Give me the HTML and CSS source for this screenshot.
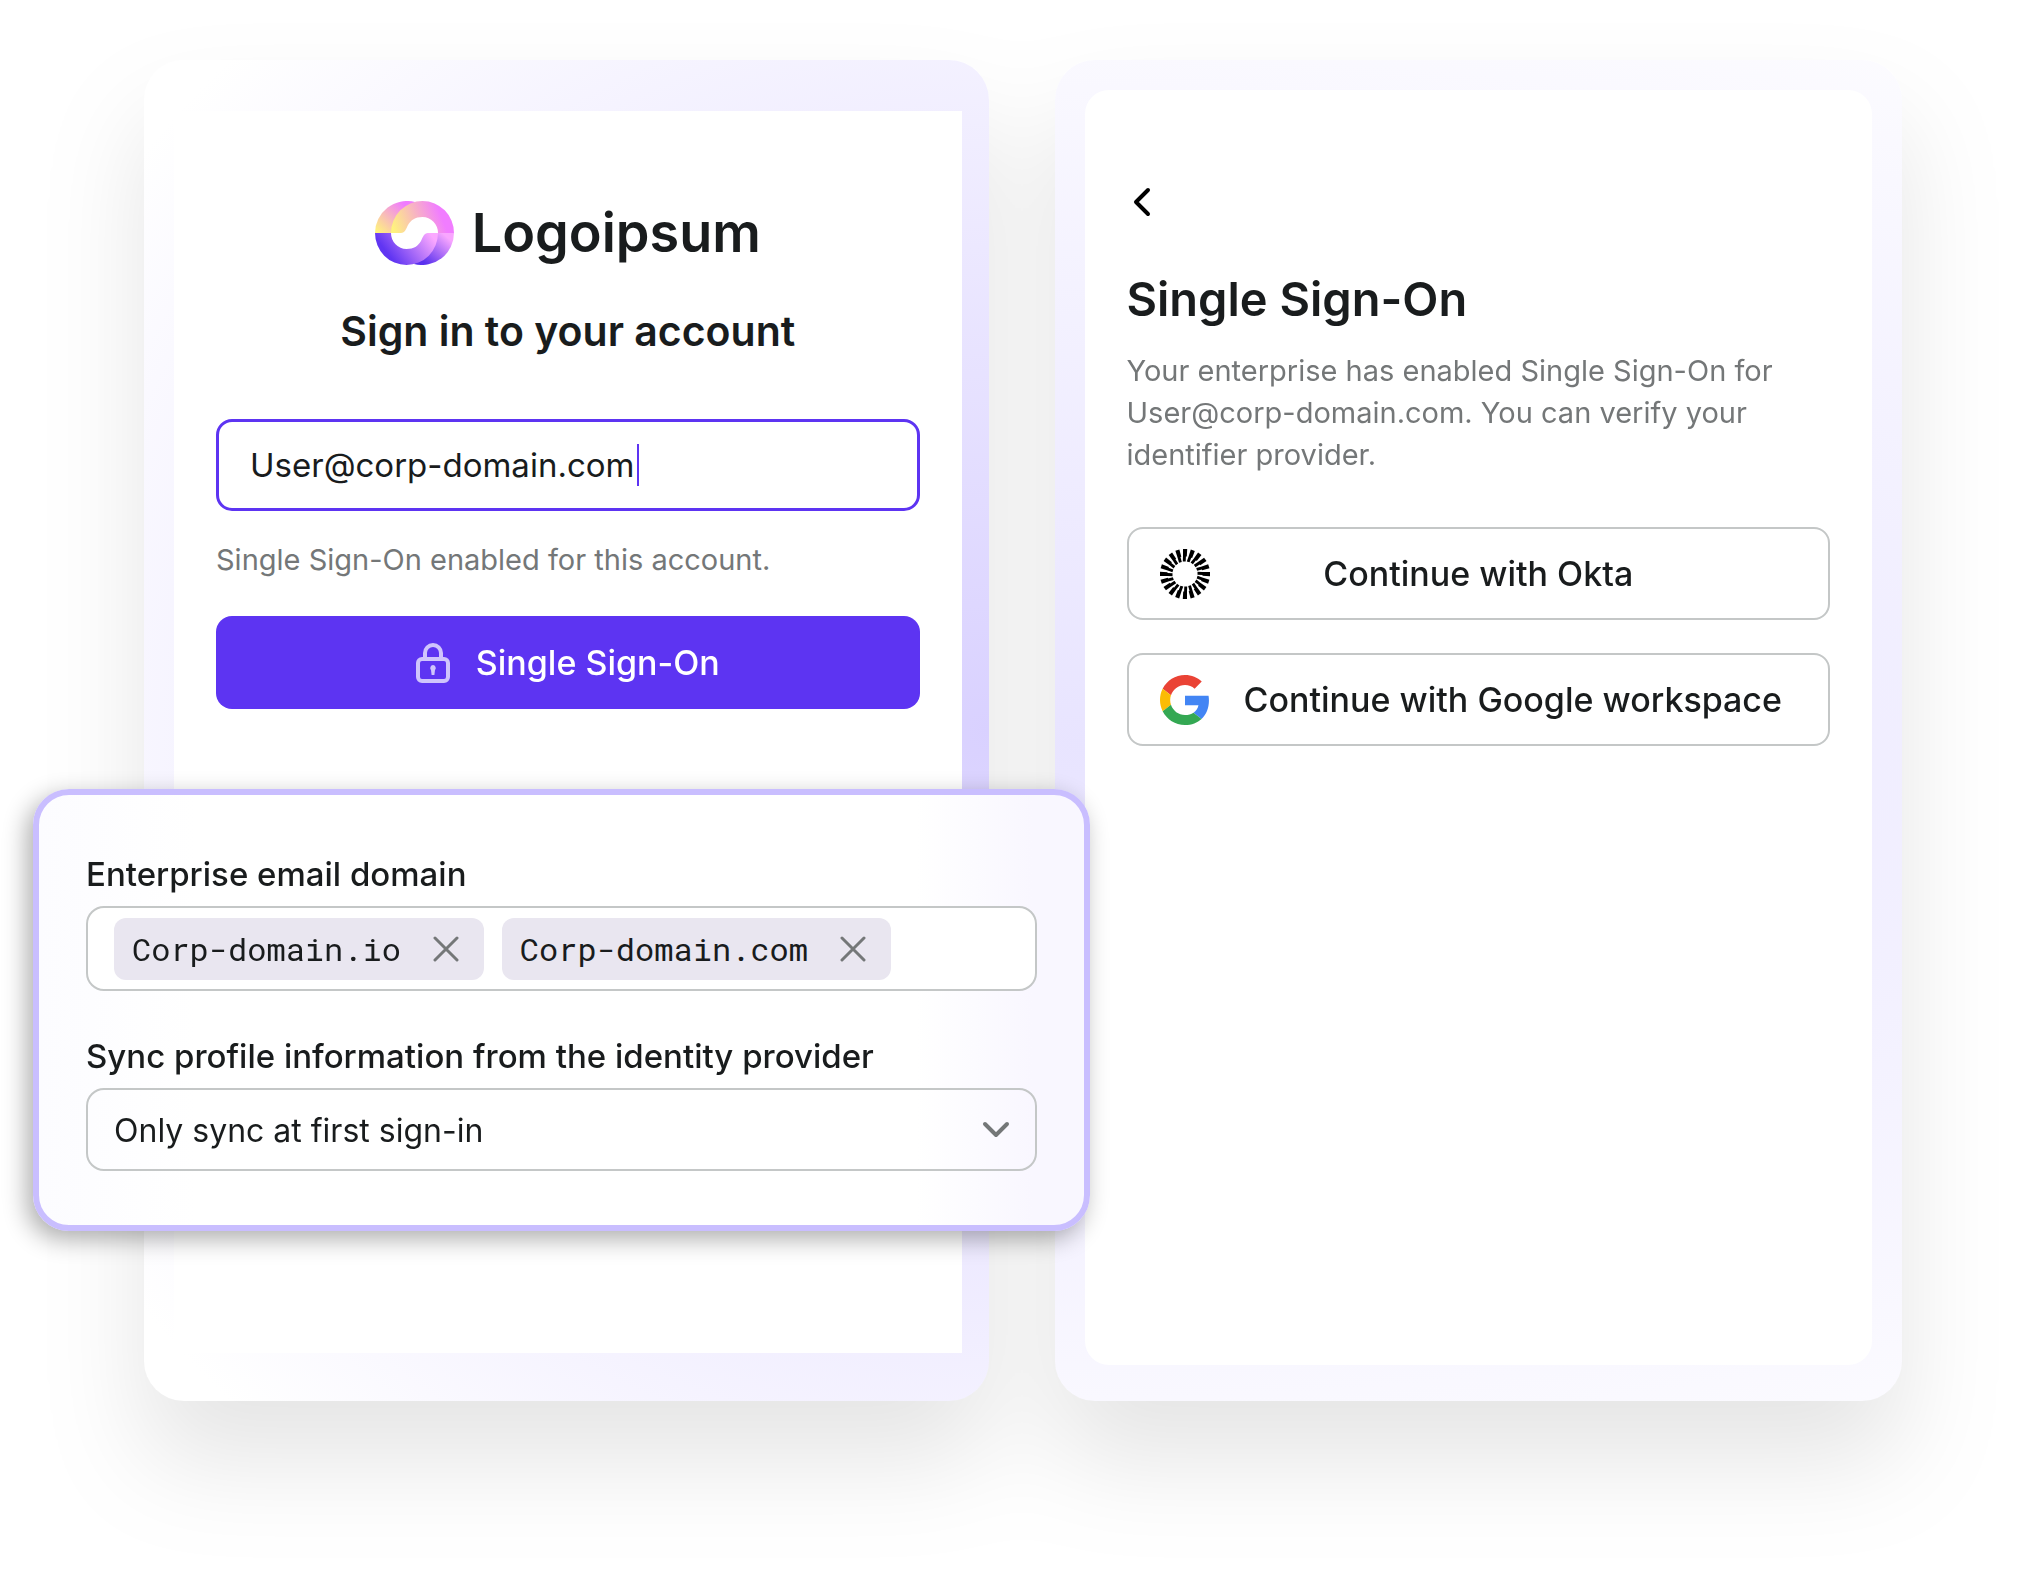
FILE: index.html
```html
<!DOCTYPE html>
<html lang="en">
<head>
  <meta charset="UTF-8">
  <meta name="viewport" content="width=device-width, initial-scale=1.0">
  <title>Single Sign-On</title>
  <link rel="stylesheet" href="styles.css">
</head>
<body>
  <main class="stage">
    <div class="cards">
      <!-- Sign in -->
      <section class="card card-signin">
        <form class="panel">
          <div class="logo">
            <svg class="logo-mark" viewBox="0 0 79 64" aria-hidden="true">
              <defs>
                <linearGradient id="topBack" gradientUnits="userSpaceOnUse" x1="3" y1="32" x2="30" y2="4">
                  <stop offset="0" stop-color="#fff47c"/>
                  <stop offset="1" stop-color="#f07bff"/>
                </linearGradient>
                <linearGradient id="topFront" gradientUnits="userSpaceOnUse" x1="19" y1="32" x2="66" y2="14">
                  <stop offset="0" stop-color="#fff47c"/>
                  <stop offset="1" stop-color="#f17dff"/>
                </linearGradient>
                <linearGradient id="bottomBack" gradientUnits="userSpaceOnUse" x1="72" y1="36" x2="50" y2="62">
                  <stop offset="0" stop-color="#f9a6ff"/>
                  <stop offset="1" stop-color="#5930ee"/>
                </linearGradient>
                <linearGradient id="bottomFront" gradientUnits="userSpaceOnUse" x1="56" y1="34" x2="20" y2="62">
                  <stop offset="0" stop-color="#fba8ff"/>
                  <stop offset="1" stop-color="#6035f2"/>
                </linearGradient>
              </defs>
              <path fill="url(#topBack)" d="M0 32A32 32 0 0 1 40 1L16 32Z"/>
              <path fill="url(#bottomBack)" d="M79 32A32 32 0 0 1 39 63L63 32Z"/>
              <path fill="url(#topFront)" d="M16 32A31.5 32 0 0 1 79 32H63A15.5 16 0 0 0 47.5 16C40 16 36 19 33 24C31 28 30 32 26 32Z"/>
              <path fill="url(#bottomFront)" d="M63 32A31.5 32 0 0 1 0 32H16A15.5 16 0 0 0 31.5 48C39 48 43 45 46 40C48 36 49 32 53 32Z"/>
            </svg>
            <span class="logo-name">Logoipsum</span>
          </div>
          <h1 class="signin-title">Sign in to your account</h1>
          <div class="field">
            <input class="field-input" type="text" value="User@corp-domain.com" aria-label="Email">
            <span class="caret"></span>
          </div>
          <p class="hint">Single Sign-On enabled for this account.</p>
          <button class="btn btn-primary" type="button">
            <svg class="lock" viewBox="0 0 34 40" fill="none" stroke="currentColor" stroke-width="4" aria-hidden="true">
              <rect x="2" y="16" width="30" height="22" rx="4"/>
              <path d="M9 16V10a8 8 0 0 1 16 0v6"/>
              <path fill="currentColor" stroke="none" d="M17 22a3 3 0 0 1 2 5l-.6 5h-2.800L15 27a3 3 0 0 1 2-5z"/>
            </svg>
            Single Sign-On
          </button>
        </form>
      </section>

      <!-- Provider list -->
      <section class="card card-sso">
        <div class="panel">
          <button class="back" type="button" aria-label="Back">
            <svg viewBox="0 0 18 30" fill="none" stroke="currentColor" stroke-width="4" stroke-linecap="round" stroke-linejoin="round">
              <path d="M15 3L3 15l12 12"/>
            </svg>
          </button>
          <h2 class="sso-title">Single Sign-On</h2>
          <p class="sso-text">Your enterprise has enabled Single Sign-On for User@corp-domain.com. You can verify your identifier provider.</p>
          <div class="providers">
            <button class="btn btn-provider" type="button">
              <svg class="provider-icon" viewBox="-25 -25 50 50" aria-hidden="true">
                <defs>
                  <path id="ray" d="M-2-25H2.200L1.800-17.500H.9L.7-12.500H-2.200L-2-17.500Z"/>
                  <g id="rays">
                    <use href="#ray"/>
                    <use href="#ray" transform="rotate(18)"/>
                    <use href="#ray" transform="rotate(36)"/>
                    <use href="#ray" transform="rotate(54)"/>
                    <use href="#ray" transform="rotate(72)"/>
                  </g>
                </defs>
                <use href="#rays"/>
                <use href="#rays" transform="rotate(90)"/>
                <use href="#rays" transform="rotate(180)"/>
                <use href="#rays" transform="rotate(270)"/>
              </svg>
              <span>Continue with Okta</span>
            </button>
            <button class="btn btn-provider" type="button">
              <svg class="provider-icon" viewBox="0 0 48 48" aria-hidden="true">
                <path fill="#EA4335" d="M24 9.500c3.540 0 6.710 1.220 9.210 3.600l6.850-6.850C35.900 2.380 30.470 0 24 0 14.620 0 6.510 5.380 2.560 13.220l7.980 6.190C12.430 13.720 17.740 9.500 24 9.500z"/>
                <path fill="#4285F4" d="M46.980 24.550c0-1.570-.15-3.090-.38-4.550H24v9.020h12.940c-.58 2.960-2.260 5.480-4.780 7.180l7.730 6c4.510-4.180 7.090-10.360 7.090-17.650z"/>
                <path fill="#FBBC05" d="M10.530 28.590c-.48-1.450-.76-2.990-.76-4.590s.27-3.140.76-4.590l-7.980-6.190C.92 16.460 0 20.120 0 24c0 3.880.92 7.540 2.560 10.780l7.970-6.190z"/>
                <path fill="#34A853" d="M24 48c6.480 0 11.930-2.130 15.890-5.810l-7.730-6c-2.150 1.450-4.920 2.300-8.160 2.300-6.260 0-11.570-4.220-13.470-9.910l-7.980 6.190C6.510 42.620 14.620 48 24 48z"/>
              </svg>
              <span>Continue with Google workspace</span>
            </button>
          </div>
        </div>
      </section>
    </div>

    <!-- Connector settings, floats over the sign in card -->
    <form class="settings">
      <label class="label" for="domains">Enterprise email domain</label>
      <div class="chips">
        <span class="chip">Corp-domain.io
          <button class="chip-remove" type="button" aria-label="Remove Corp-domain.io">
            <svg viewBox="0 0 26 26" fill="none" stroke="currentColor" stroke-width="3" stroke-linecap="round"><path d="M2 2l22 22M24 2L2 24"/></svg>
          </button>
        </span>
        <span class="chip">Corp-domain.com
          <button class="chip-remove" type="button" aria-label="Remove Corp-domain.com">
            <svg viewBox="0 0 26 26" fill="none" stroke="currentColor" stroke-width="3" stroke-linecap="round"><path d="M2 2l22 22M24 2L2 24"/></svg>
          </button>
        </span>
        <input class="chips-input" id="domains" type="text">
      </div>
      <label class="label" for="sync">Sync profile information from the identity provider</label>
      <div class="select">
        <select id="sync">
          <option>Only sync at first sign-in</option>
        </select>
        <svg class="select-arrow" viewBox="0 0 28 18" fill="none" stroke="currentColor" stroke-width="4" stroke-linecap="round" stroke-linejoin="round" aria-hidden="true"><path d="M3 3l11 11L25 3"/></svg>
      </div>
    </form>
  </main>
</body>
</html>
```
FILE: styles.css
```css
:root {
  --primary: #5d34f2;
  --text: #191c1d;
  --muted: #747778;
  --border: #c4c7c7;
  --lilac: #c9beff;
}
* { box-sizing: border-box; }
body {
  margin: 0;
  font-family: Inter, "Liberation Sans", sans-serif;
  font-size: 32px;
  background: #fff;
  color: var(--text);
}
h1, h2, p { margin: 0; }
button, input, select {
  font: inherit;
  color: inherit;
}
button {
  border: none;
  background: none;
  padding: 0;
  cursor: pointer;
}
svg { display: block; }

.stage {
  position: relative;
  min-height: 100vh;
  display: flex;
}
.cards {
  flex: 1;
  display: flex;
  gap: 66px;
  padding: 60px 120px 180px 144px;
  filter: drop-shadow(0 60px 50px rgba(0, 0, 0, 0.1));
}
.card {
  flex: 1;
  min-width: 0;
  display: flex;
  border-radius: 40px;
}
.card-signin {
  padding: 51px 27px 48px 30px;
  background: radial-gradient(125% 72% at 100% 50%, #d9d1ff, #fff);
}
.card-sso {
  padding: 30px 30px 36px;
  background: radial-gradient(250% 66% at 5% 51%, #e8e4ff, #fff);
}
.panel {
  flex: 1;
  min-width: 0;
  background: #fff;
}
.card-signin .panel { padding: 90px 42px; }
.card-sso .panel {
  padding: 97px 42px;
  border-radius: 24px;
}

/* Sign in */
.logo {
  display: flex;
  align-items: center;
  justify-content: center;
  gap: 18px;
}
.logo-mark {
  width: 79px;
  height: 64px;
}
.logo-name {
  font-size: 54px;
  font-weight: 600;
  line-height: 60px;
}
.signin-title {
  margin: 36px 0 58px;
  font-size: 41px;
  font-weight: 600;
  line-height: 60px;
  text-align: center;
}
.field {
  display: flex;
  align-items: center;
  height: 92px;
  padding: 0 31px;
  border: 3px solid var(--primary);
  border-radius: 16px;
}
.field-input {
  field-sizing: content;
  border: none;
  outline: none;
  padding: 0;
  background: none;
  font-size: 33px;
}
.caret {
  width: 2px;
  height: 42px;
  margin-left: 3px;
  background: var(--primary);
}
.hint {
  margin: 28px 0 35px;
  font-size: 29px;
  line-height: 42px;
  color: var(--muted);
}
.btn {
  width: 100%;
  height: 93px;
  border-radius: 16px;
  font-size: 34px;
  font-weight: 500;
}
.btn-primary {
  display: flex;
  align-items: center;
  justify-content: center;
  gap: 26px;
  background: var(--primary);
  color: #fff;
}
.lock {
  width: 34px;
  height: 40px;
  color: #cfc4fc;
}

/* Single Sign-On */
.back {
  margin-left: 6px;
  display: block;
}
.back svg {
  width: 18px;
  height: 30px;
  color: #000;
}
.sso-title {
  margin: 52px 0 21px;
  font-size: 47px;
  font-weight: 600;
  line-height: 60px;
}
.sso-text {
  font-size: 29px;
  line-height: 42px;
  color: var(--muted);
}
.providers {
  display: flex;
  flex-direction: column;
  gap: 33px;
  margin-top: 51px;
}
.btn-provider {
  display: grid;
  grid-template-columns: minmax(84px, 1fr) auto 1fr;
  align-items: center;
  padding: 0 31px;
  border: 2px solid var(--border);
  white-space: nowrap;
}
.provider-icon {
  width: 50px;
  height: 50px;
}

/* Settings */
.settings {
  position: absolute;
  top: 789px;
  left: 33px;
  width: calc(50% + 46px);
  padding: 59px 47px 54px;
  border: 6px solid var(--lilac);
  border-radius: 36px;
  background: linear-gradient(90deg, #fcfcff, #fff 15%, #fff 84%, #f9f7ff 95%);
  box-shadow: -6px 8px 24px rgba(0, 0, 0, 0.32);
}
.label {
  display: block;
  font-size: 33px;
  font-weight: 500;
  line-height: 40px;
}
.chips {
  display: flex;
  align-items: center;
  gap: 18px;
  height: 85px;
  margin: 12px 0 45px;
  padding: 0 26px;
  border: 2px solid var(--border);
  border-radius: 18px;
  background: #fff;
}
.chip {
  display: flex;
  align-items: center;
  gap: 32px;
  height: 62px;
  padding: 0 25px 0 18px;
  border-radius: 12px;
  background: #e9e6f0;
  font-family: "Roboto Mono", "Liberation Mono", monospace;
  white-space: nowrap;
}
.chip-remove svg {
  width: 26px;
  height: 26px;
  color: var(--muted);
}
.chips-input {
  flex: 1;
  min-width: 0;
  border: none;
  outline: none;
  background: none;
}
.select {
  position: relative;
  margin-top: 12px;
}
.select select {
  width: 100%;
  height: 83px;
  padding: 2px 60px 0 26px;
  border: 2px solid var(--border);
  border-radius: 18px;
  background: none;
  appearance: none;
}
.select-arrow {
  position: absolute;
  top: 33px;
  right: 27px;
  width: 28px;
  height: 18px;
  color: var(--muted);
  pointer-events: none;
}
```
